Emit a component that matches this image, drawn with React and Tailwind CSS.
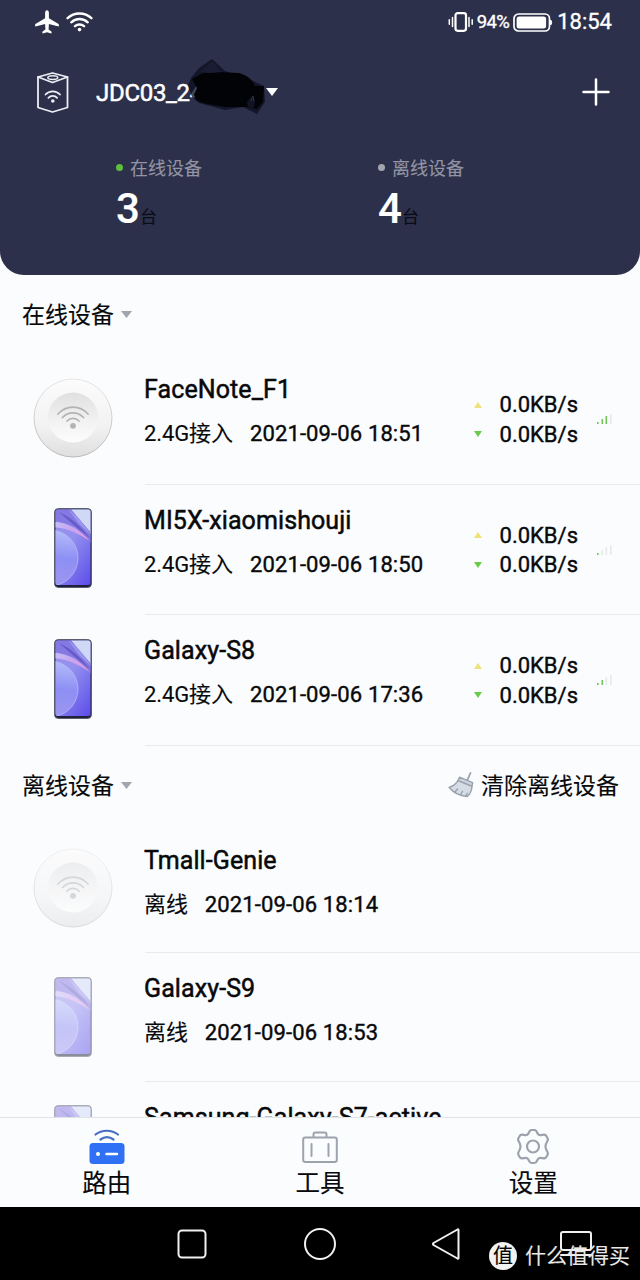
const onlineDevices = [
  { name: 'FaceNote_F1', kind: 'speaker', time: '2021-09-06 18:51', signal: 3 },
  { name: 'MI5X-xiaomishouji', kind: 'phone', time: '2021-09-06 18:50', signal: 1 },
  { name: 'Galaxy-S8', kind: 'phone', time: '2021-09-06 17:36', signal: 2 },
];

const offlineDevices = [
  { name: 'Tmall-Genie', kind: 'speaker', time: '2021-09-06 18:14' },
  { name: 'Galaxy-S9', kind: 'phone', time: '2021-09-06 18:53' },
  { name: 'Samsung-Galaxy-S7-active', kind: 'phone' },
];

function StatusBar() {
  return (
    <div className="flex h-11 items-center justify-between pr-[28px] pl-[35px] text-white [-webkit-text-stroke:0.35px]">
      <div className="flex items-center gap-[7px]">
        <svg width="24" height="24" viewBox="0 0 24 24" fill="currentColor">
          <path d="M12 .2c1.2 0 1.9 1.2 1.9 2.7v5.3l9.7 5.9c.4.3.4 2.5 0 2.4l-9.7-2.6-.3 5.6 2.8 2.1c.3.3.3 1.9-.1 1.8L12 22.300l-4.300 1.100c-.4.1-.4-1.500-.1-1.800l2.800-2.100-.3-5.600-9.700 2.600c-.4.1-.4-2.100 0-2.400l9.700-5.900V2.900C10.100 1.400 10.800.2 12 .2z" />
        </svg>
        <svg width="27" height="20" viewBox="0 0 27 20" fill="none" stroke="currentColor" strokeWidth="2.400" strokeLinecap="round">
          <path d="M1.600 6.200a17.500 17.500 0 0 1 23.800 0M5.300 10.300a12 12 0 0 1 16.400 0M9 14.200a6.600 6.600 0 0 1 9 0" />
          <circle cx="13.500" cy="17.600" r="1.800" fill="currentColor" stroke="none" />
        </svg>
      </div>
      <div className="flex items-center">
        <svg width="26" height="20" viewBox="0 0 26 20" fill="none" stroke="currentColor" strokeLinecap="round">
          <rect x="7.500" y="1.200" width="10.500" height="17.600" rx="2.200" strokeWidth="2.200" />
          <path d="M4.500 5.500v9M1.300 7.800v4.400M21 5.500v9M24.200 7.800v4.400" strokeWidth="1.500" />
        </svg>
        <span className="ml-[3px] pt-px text-[18.500px] leading-none tracking-[-0.6px]">94%</span>
        <svg className="ml-[4px]" width="40" height="19" viewBox="0 0 40 19" fill="none">
          <rect x="1" y="1" width="35.500" height="17" rx="4.500" stroke="currentColor" strokeWidth="1.700" />
          <rect x="3.600" y="3.500" width="29.500" height="12" rx="2.500" fill="currentColor" />
          <path d="M37.500 7c1.500.6 1.500 4.400 0 5z" fill="currentColor" stroke="currentColor" />
        </svg>
        <span className="ml-1 text-[22px] leading-none">18:54</span>
      </div>
    </div>
  );
}

function RouterBoxIcon() {
  return (
    <svg width="34" height="42" viewBox="0 0 34 42" fill="none" stroke="#eceef5" strokeWidth="1.800" strokeLinejoin="round" strokeLinecap="round">
      <path d="M2 6 16.500 2 31.500 6V36.500L16.500 41 2 36.500z" />
      <path d="M2 6 16.500 11.500 31.500 6" />
      <ellipse cx="16.800" cy="6.600" rx="5" ry="1.900" strokeWidth="1.400" />
      <path d="M9.500 23.500c3.800-4.300 10.700-4.300 14.500 0M12.400 26.900c2.300-2.600 6.400-2.600 8.700 0" />
      <circle cx="16.800" cy="30" r="1.800" fill="#eceef5" stroke="none" />
    </svg>
  );
}

// Brush strokes that hide the rest of the router id
function Redaction() {
  return (
    <svg className="absolute top-[-16px] left-[91px]" width="82" height="58" viewBox="0 0 82 58">
      <path d="M25 0 12 9 4 19 1 26 5 38 12 44 38 51 56 48 70 55 78 43 77 27 64 21 38 12z" fill="#0b0e1f" opacity=".75" />
      <path d="M5 20 16 14 30 13 52 14C62 17 66 22 68 27L77 27 76 43 70 50 60 48 38 48 20 45 10 42 7 36 10 29z" fill="#020307" />
      <path d="m13 13 12-11 10 11-11 1z" fill="#181d33" />
      <path d="m60 43 4-5 4 4-1 7-6-1z" fill="#111423" />
      <path d="m64 42 2-5 1 5" stroke="#303244" fill="none" />
    </svg>
  );
}

function Stat({ label, value, dot }) {
  return (
    <div className="w-[263px]">
      <div className="flex h-6 items-center">
        <span className={`mr-[7px] size-[7px] rounded-full ${dot}`} />
        <span className="mt-[3px] text-[18px] leading-6 text-[#9294a3]">{label}</span>
      </div>
      <div className="mt-[7px] flex h-[46px] items-baseline leading-[46px]">
        <span className="text-[42px] font-medium text-white">{value}</span>
        <span className="text-[17px] text-[#090b16]">台</span>
      </div>
    </div>
  );
}

function Header() {
  return (
    <header className="h-[275px] shrink-0 rounded-b-[24px] bg-[#2d304a]">
      <StatusBar />
      <div className="flex h-24 items-center pr-[30px] pl-[36px]">
        <RouterBoxIcon />
        <div className="relative ml-[26px] flex items-center">
          <span className="w-[170px] pt-[2px] text-[24px] leading-8 tracking-[-0.3px] text-white [-webkit-text-stroke:0.5px]">JDC03_24</span>
          <svg width="12" height="8" viewBox="0 0 12 8" fill="white">
            <path d="M0 0h12L6 8z" />
          </svg>
          <Redaction />
        </div>
        <svg className="ml-auto" width="28" height="28" viewBox="0 0 28 28" stroke="white" strokeWidth="2.500" strokeLinecap="round">
          <path d="M14 1.500v25M1.500 14h25" />
        </svg>
      </div>
      <div className="mt-[15px] flex pl-[116px]">
        <Stat label="在线设备" value="3" dot="bg-[#5fbf3c]" />
        <Stat label="离线设备" value="4" dot="bg-[#a3a4ad]" />
      </div>
    </header>
  );
}

function SectionTitle({ title, children }) {
  return (
    <div className="flex h-[79px] items-center pr-[21px] pl-[22px] text-[23px]">
      <span className="pt-[4px]">{title}</span>
      <svg className="ml-[7px]" width="11" height="7" viewBox="0 0 11 7" fill="#a0a5ae">
        <path d="M0 0h11L5.500 7z" />
      </svg>
      {children}
    </div>
  );
}

function BroomIcon() {
  return (
    <svg width="26" height="26" viewBox="0 0 26 26" fill="none" stroke="#9aa2ae" strokeWidth="1.400" strokeLinejoin="round" strokeLinecap="round">
      <path d="m22.500 1-3.200 7.200" strokeWidth="1.800" />
      <path d="m11.500 5.200 13.200 5.500-.8 3.700-14-5.800z" fill="#cbd2dc" />
      <path d="M9.900 8.600C8 12 5 14.200 1 15.300c4 5 10.500 8.600 18.200 9.300 3.100-3 4.700-6.500 4.700-10.200z" fill="#d6dce4" />
      <path d="m7 20 2.500-3M12.500 22.800l2-3.500M17.500 24.300l1.700-3" />
    </svg>
  );
}

function SpeakerImage() {
  return (
    <svg width="80" height="80" viewBox="0 0 80 80" fill="none">
      <defs>
        <linearGradient id="shell" x1="0" y1="0" x2="0" y2="1">
          <stop stopColor="#fcfcfc" />
          <stop offset=".6" stopColor="#f2f2f2" />
          <stop offset="1" stopColor="#dfdfdf" />
        </linearGradient>
        <linearGradient id="shellEdge" x1="0" y1="0" x2="0" y2="1">
          <stop stopColor="#e6e6e6" />
          <stop offset="1" stopColor="#b8b8b8" />
        </linearGradient>
        <linearGradient id="dish" x1="0" y1="0" x2="0" y2="1">
          <stop stopColor="#e0e0e0" />
          <stop offset=".55" stopColor="#f1f1f1" />
          <stop offset="1" stopColor="#fdfdfd" />
        </linearGradient>
      </defs>
      <circle cx="40" cy="40" r="39" fill="url(#shell)" stroke="url(#shellEdge)" />
      <circle cx="40" cy="39.500" r="25" fill="url(#dish)" />
      <g stroke="#b3b3b3" strokeWidth="1.800" strokeLinecap="round">
        <path d="M25 36c8-9.300 22-9.300 30 0M29.500 39.500c5.800-6.300 15.200-6.300 21 0M34 43c3.300-3.600 8.700-3.600 12 0" />
      </g>
      <circle cx="40" cy="47.800" r="2.900" fill="#b3b3b3" />
    </svg>
  );
}

function PhoneImage() {
  return (
    <svg width="40" height="82" viewBox="0 0 40 82">
      <defs>
        <linearGradient id="wall" x1=".1" y1="0" x2=".8" y2="1">
          <stop stopColor="#9a94ee" />
          <stop offset=".45" stopColor="#928fee" />
          <stop offset="1" stopColor="#5f50ea" />
        </linearGradient>
        <linearGradient id="planet" x1=".7" y1="0" x2=".6" y2="1">
          <stop stopColor="#b4bcfa" />
          <stop offset=".5" stopColor="#8e8ff4" />
          <stop offset="1" stopColor="#9c96f0" />
        </linearGradient>
        <linearGradient id="ring" x1="0" y1="0" x2="1" y2=".4">
          <stop stopColor="#c3c3f8" />
          <stop offset=".5" stopColor="#c9a6f0" />
          <stop offset="1" stopColor="#dc9ae4" />
        </linearGradient>
        <clipPath id="screen">
          <rect x="2.500" y="2.500" width="35" height="75.500" rx="2.500" />
        </clipPath>
      </defs>
      <rect x="1.500" y="1.500" width="37" height="79" rx="4" fill="#20213b" stroke="#5c5d70" />
      <g clipPath="url(#screen)">
        <path d="M0 0h40v82H0z" fill="url(#wall)" />
        <path d="M16 0h24v30z" fill="#cfd9f6" />
        <path d="M0 0h16l24 28v10L22 20 0 13z" fill="#8478e2" />
        <path d="M6 5c13 6 22 15 32 27L22 19z" fill="#665ac8" />
        <path d="M15 2c7 5 16 15 23 26L26 17z" fill="#9d96ee" />
        <path d="M0 15c14 0 26 7 37 19-11-7-21-13-37-14z" fill="url(#ring)" />
        <circle cx="-3" cy="51" r="28" fill="url(#planet)" stroke="#b7b7fa" strokeWidth=".8" />
      </g>
    </svg>
  );
}

const signalBars = [
  { x: 1, h: 2 },
  { x: 5.500, h: 5 },
  { x: 9.500, h: 8 },
  { x: 14, h: 10 },
];

function Signal({ level }) {
  return (
    <svg className="ml-[18px]" width="17" height="11" viewBox="0 0 17 11">
      {signalBars.map((bar, i) => (
        <rect key={bar.x} x={bar.x} y={10 - bar.h} width="1.600" height={bar.h} fill={i < level ? '#72c25a' : '#e6eae8'} />
      ))}
    </svg>
  );
}

function Rate({ up }) {
  return (
    <div className="flex h-[29.500px] items-center">
      <svg width="8" height="6" viewBox="0 0 8 6">
        {up ? <path d="M4 0 8 6H0z" fill="#eee27a" /> : <path d="M0 0h8L4 6z" fill="#6acb49" />}
      </svg>
      <span className="ml-[18px] pt-px text-[22px] leading-none [-webkit-text-stroke:0.4px]">0.0KB/s</span>
    </div>
  );
}

function DeviceRow({ device, online }) {
  return (
    <div className={`flex shrink-0 pl-[33px] ${online ? 'h-[130.500px]' : 'h-[128.500px]'}`}>
      <div className={`flex h-[127px] w-20 items-center justify-center ${online ? '' : 'opacity-50'}`}>
        {device.kind === 'speaker' ? <SpeakerImage /> : <PhoneImage />}
      </div>
      <div className="ml-8 flex flex-1 border-b border-[#e9eaed]">
        <div className="-ml-px flex-1 whitespace-nowrap">
          <div className="mt-5 text-[25px] leading-8 tracking-[0.1px] [-webkit-text-stroke:0.5px]">{device.name}</div>
          {device.time && (
            <div className="mt-[12px] flex text-[22px] leading-8">
              <span className="tracking-[-0.1px]">{online ? '2.4G接入' : '离线'}</span>
              <span className="ml-[17px] tracking-[0.13px] [-webkit-text-stroke:0.4px]">{device.time}</span>
            </div>
          )}
        </div>
        {online && (
          <div className="flex h-[131px] items-center pr-[27px]">
            <div>
              <Rate up />
              <Rate />
            </div>
            <Signal level={device.signal} />
          </div>
        )}
      </div>
    </div>
  );
}

function RouterTabIcon() {
  return (
    <svg width="36" height="36" viewBox="0 0 36 36" fill="none">
      <path d="M6.500 5.500c6.500-5 16-5 22.500 0M11.500 10.500c4-3 9-3 13 0" stroke="#456fc1" strokeWidth="2.200" strokeLinecap="round" />
      <rect x=".5" y="14" width="35" height="21" rx="3.500" fill="#2f70f4" />
      <circle cx="9" cy="25" r="2" fill="white" />
      <path d="M17.500 25h10.500" stroke="white" strokeWidth="2.500" strokeLinecap="round" />
    </svg>
  );
}

function ToolsTabIcon() {
  return (
    <svg width="36" height="36" viewBox="0 0 36 36" fill="none" stroke="#9da3ac" strokeWidth="2" strokeLinejoin="round" strokeLinecap="round">
      <rect x="1.200" y="8.500" width="33.600" height="24.500" rx="2" />
      <path d="M11.500 8V5.200c0-1 .7-1.700 1.700-1.700h9.600c1 0 1.700.7 1.700 1.700V8M9.500 15v12M26.500 15v12" />
    </svg>
  );
}

function SettingsTabIcon() {
  return (
    <svg width="36" height="36" viewBox="0 0 36 36" fill="none" stroke="#9da3ac" strokeWidth="2.200" strokeLinejoin="round">
      <path d="M16.500 1h3c2.800 0 2 3.400 4.300 4.700 2.300 1.300 5.500-1.400 7.200.8l1.600 2.800c1.500 2.600-2.100 3.700-2.100 8.200s3.600 5.600 2.100 8.200L31 28.500c-1.700 2.200-4.900-.5-7.200.8-2.300 1.300-1.500 4.700-4.300 4.700h-3c-2.800 0-2-3.400-4.300-4.700-2.300-1.300-5.500 1.400-7.200-.8l-1.600-2.800c-1.500-2.600 2.100-3.700 2.100-8.200S1.900 11.900 3.400 9.300L5 6.500c1.700-2.200 4.900.5 7.200-.8C14.500 4.400 13.700 1 16.500 1z" />
      <circle cx="18" cy="17.500" r="6" />
    </svg>
  );
}

const tabs = [
  { label: '路由', Icon: RouterTabIcon },
  { label: '工具', Icon: ToolsTabIcon },
  { label: '设置', Icon: SettingsTabIcon },
];

function TabBar() {
  return (
    <nav className="grid h-[90px] shrink-0 grid-cols-3 border-t border-[#e1e3e6] bg-[#fbfcfe]">
      {tabs.map(({ label, Icon }) => (
        <div key={label} className="flex flex-col items-center pt-[11px]">
          <Icon />
          <span className="mt-[2px] text-[24.500px] leading-[34px]">{label}</span>
        </div>
      ))}
    </nav>
  );
}

function SystemNav() {
  return (
    <div className="relative flex h-[73px] shrink-0 items-center gap-[94px] bg-black pl-[175px] text-[#f0f0f0]">
      <svg width="34" height="34" viewBox="0 0 34 34" fill="none" stroke="currentColor" strokeWidth="2">
        <rect x="3.500" y="3.500" width="27" height="27" rx="3.500" />
      </svg>
      <svg width="34" height="34" viewBox="0 0 34 34" fill="none" stroke="currentColor" strokeWidth="2">
        <circle cx="17" cy="17" r="15" />
      </svg>
      <svg width="34" height="34" viewBox="0 0 34 34" fill="none" stroke="currentColor" strokeWidth="2" strokeLinejoin="round">
        <path d="M27.500 3v28q0 1-1 .5L2.500 18q-1-1 0-2L26.500 2.500q1-.5 1 .5z" />
      </svg>
      <svg width="34" height="34" viewBox="0 0 34 34" fill="none" stroke="currentColor" strokeWidth="2" strokeLinecap="round">
        <rect x="2" y="5" width="30" height="18" rx="2" />
        <path d="M2 28h30" />
      </svg>
      <div className="absolute top-[34px] left-[489px] flex items-center">
        <span className="flex size-[28px] items-center justify-center rounded-full bg-[#f2f2f2] text-[20px] leading-none text-black">值</span>
        <span className="ml-2 text-[21px] leading-[30px] whitespace-nowrap text-[#e8e8e8]">什么值得买</span>
      </div>
    </div>
  );
}

export default function App() {
  return (
    <div className="flex h-[1280px] w-[640px] flex-col overflow-hidden bg-[#fbfcfe] font-['Roboto','Noto_Sans_CJK_SC',sans-serif] font-normal text-[#08090b] [-webkit-text-stroke:0.12px]">
      <Header />
      <main className="min-h-0 flex-1 overflow-hidden">
        <SectionTitle title="在线设备" />
        {onlineDevices.map((device) => (
          <DeviceRow key={device.name} device={device} online />
        ))}
        <SectionTitle title="离线设备">
          <div className="ml-auto flex items-center gap-[7px]">
            <BroomIcon />
            <span className="pt-[4px]">清除离线设备</span>
          </div>
        </SectionTitle>
        {offlineDevices.map((device) => (
          <DeviceRow key={device.name} device={device} />
        ))}
      </main>
      <TabBar />
      <SystemNav />
    </div>
  );
}
